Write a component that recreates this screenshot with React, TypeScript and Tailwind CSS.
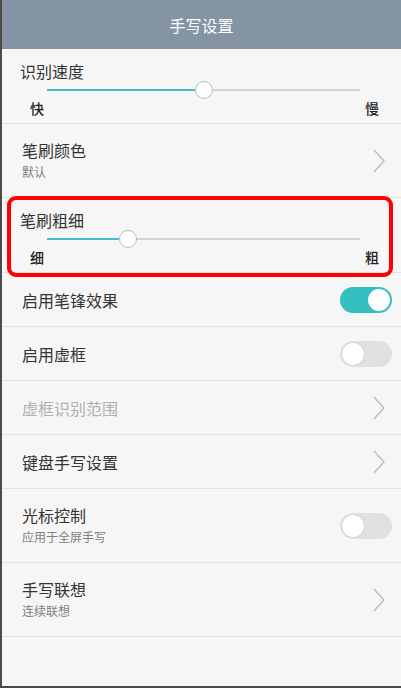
import React from "react";

const font = { fontFamily: '"Noto Sans CJK SC", "Noto Sans", sans-serif' };

function Chevron() {
    return (
        <svg width="14" height="26" viewBox="0 0 14 26" className="shrink-0">
            <polyline points="2,2 12,13 2,24" fill="none" stroke="#bdbdbd" strokeWidth="1.4" />
        </svg>
    );
}

function Toggle({ on }: { on: boolean }) {
    return on ? (
        <div className="w-[52px] h-[26px] rounded-full bg-[#36bfc1] flex items-center justify-end pr-[2px] shrink-0">
            <div className="w-[22px] h-[22px] rounded-full bg-white" />
        </div>
    ) : (
        <div className="w-[52px] h-[26px] rounded-full bg-[#e0e0e0] flex items-center pl-[2px] shrink-0">
            <div className="w-[22px] h-[22px] rounded-full bg-white shadow-[0_0_1px_rgba(0,0,0,0.3)]" />
        </div>
    );
}

function SliderRow({ title, left, right, pct }: { title: string; left: string; right: string; pct: number }) {
    return (
        <div className="h-[75px] border-b border-[#e2e2e2] pt-[12px] pl-[18px]">
            <div className="text-[16px] leading-[20px] text-[#333]">{title}</div>
            <div className="relative h-[18px] ml-[27px] w-[313px] flex items-center">
                <div className="h-[2px] w-full bg-[#d4d4d4]" />
                <div className="absolute left-0 h-[2px] bg-[#3cc1c6]" style={{ width: `${pct}%` }} />
                <div
                    className="absolute w-[18px] h-[18px] rounded-full bg-white border border-[#bdbdbd] -translate-x-1/2"
                    style={{ left: `${pct}%` }}
                />
            </div>
            <div className="flex justify-between pl-[10px] pr-[22px] text-[14px] leading-[18px] text-[#222] font-medium">
                <span>{left}</span>
                <span>{right}</span>
            </div>
        </div>
    );
}

function Row({
    title,
    sub,
    disabled,
    right,
    tall,
}: {
    title: string;
    sub?: string;
    disabled?: boolean;
    right: React.ReactNode;
    tall?: boolean;
}) {
    return (
        <div
            className={`flex items-center justify-between border-b border-[#e2e2e2] pl-[20px] ${
                tall ? "h-[74px]" : "h-[54px]"
            }`}
        >
            <div className="flex flex-col">
                <span className={`text-[16px] leading-[20px] ${disabled ? "text-[#b0b0b0]" : "text-[#333]"}`}>{title}</span>
                {sub && <span className="mt-[3px] text-[12px] leading-[18px] text-[#808080]">{sub}</span>}
            </div>
            {right}
        </div>
    );
}

export default function App() {
    return (
        <div className="w-[401px] h-[688px] flex flex-col bg-[#4b4b4b] overflow-hidden" style={font}>
            <div className="flex flex-1 min-h-0">
                <div className="w-[2px] bg-[#4b4b4b]" />
                <div className="flex-1 flex flex-col bg-[#f6f6f6]">
                    <div className="h-[49px] bg-[#8494a5] flex items-center justify-center text-white text-[16px]">
                        手写设置
                    </div>
                    <SliderRow title="识别速度" left="快" right="慢" pct={50} />
                    <Row
                        tall
                        title="笔刷颜色"
                        sub="默认"
                        right={<div className="pr-[15px]"><Chevron /></div>}
                    />
                    <div className="relative">
                        <SliderRow title="笔刷粗细" left="细" right="粗" pct={26} />
                        <div className="absolute top-[-2px] bottom-[-4px] left-[5px] right-[8px] border-4 border-[#ff0000] rounded-[9px] pointer-events-none" />
                    </div>
                    <Row title="启用笔锋效果" right={<div className="pr-[9px]"><Toggle on /></div>} />
                    <Row title="启用虚框" right={<div className="pr-[9px]"><Toggle on={false} /></div>} />
                    <Row title="虚框识别范围" disabled right={<div className="pr-[15px]"><Chevron /></div>} />
                    <Row title="键盘手写设置" right={<div className="pr-[15px]"><Chevron /></div>} />
                    <Row
                        tall
                        title="光标控制"
                        sub="应用于全屏手写"
                        right={<div className="pr-[9px]"><Toggle on={false} /></div>}
                    />
                    <Row
                        tall
                        title="手写联想"
                        sub="连续联想"
                        right={<div className="pr-[15px]"><Chevron /></div>}
                    />
                </div>
            </div>
            <div className="h-[2px] bg-[#4b4b4b]" />
        </div>
    );
}
